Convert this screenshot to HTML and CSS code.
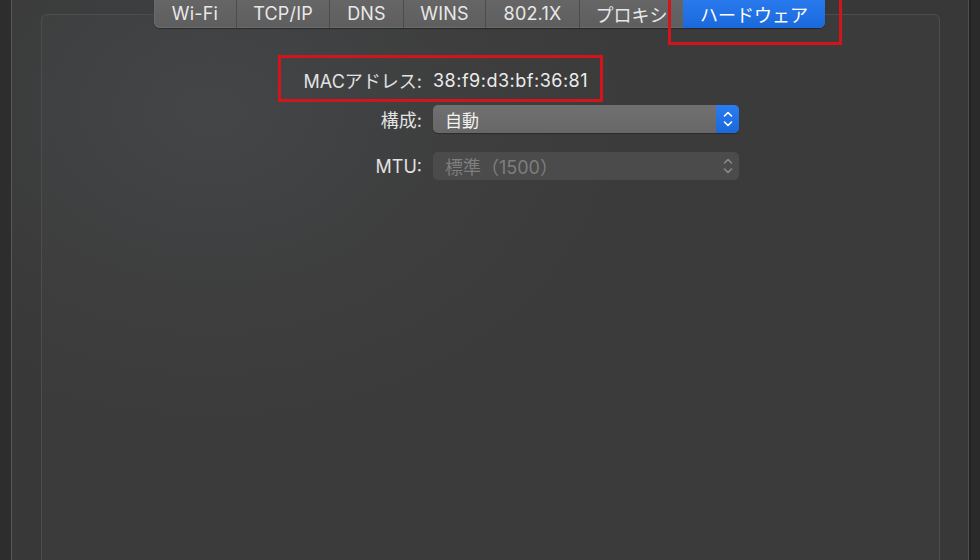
FILE: index.html
```html
<!DOCTYPE html>
<html lang="ja">
<head>
<meta charset="utf-8">
<title>ハードウェア</title>
<link rel="stylesheet" href="styles.css">
</head>
<body>
<div class="window">
  <div class="edge-left"></div>
  <div class="main">
    <div class="tabs">
      <div class="tab">Wi-Fi</div>
      <div class="tab">TCP/IP</div>
      <div class="tab">DNS</div>
      <div class="tab">WINS</div>
      <div class="tab">802.1X</div>
      <div class="tab">プロキシ</div>
      <div class="tab tab-active">ハードウェア</div>
    </div>
    <div class="panel">
      <div class="form">
        <div class="row row-mac">
          <div class="label">MACアドレス:</div>
          <div class="value">38:f9:d3:bf:36:81</div>
        </div>
        <div class="row row-config">
          <div class="label">構成:</div>
          <div class="popup">
            <span class="popup-text">自動</span>
            <span class="stepper">
              <svg width="10" height="18" viewBox="0 0 10 18"><path d="M1.5 6 L5 2.5 L8.5 6" fill="none" stroke="#fff" stroke-width="1.6" stroke-linecap="round" stroke-linejoin="round"/><path d="M1.5 12 L5 15.5 L8.5 12" fill="none" stroke="#fff" stroke-width="1.6" stroke-linecap="round" stroke-linejoin="round"/></svg>
            </span>
          </div>
        </div>
        <div class="row row-mtu">
          <div class="label">MTU:</div>
          <div class="popup popup-disabled">
            <span class="popup-text">標準（1500）</span>
            <span class="stepper">
              <svg width="10" height="18" viewBox="0 0 10 18"><path d="M1.5 6 L5 2.5 L8.5 6" fill="none" stroke="#8a8a8a" stroke-width="1.6" stroke-linecap="round" stroke-linejoin="round"/><path d="M1.5 12 L5 15.5 L8.5 12" fill="none" stroke="#8a8a8a" stroke-width="1.6" stroke-linecap="round" stroke-linejoin="round"/></svg>
            </span>
          </div>
        </div>
      </div>
    </div>
    <div class="mark mark-tab"></div>
    <div class="mark mark-mac"></div>
  </div>
  <div class="edge-right"></div>
</div>
</body>
</html>
```
FILE: styles.css
```css
* { box-sizing: border-box; }
html, body {
  margin: 0;
  padding: 0;
  width: 980px;
  height: 560px;
  overflow: hidden;
  background: #383838;
  font-family: Inter, "Noto Sans CJK JP", sans-serif;
  color: #e4e4e4;
}
.window {
  display: flex;
  height: 560px;
}
.edge-left {
  width: 12px;
  background: #2d2d2d;
  border-right: 1px solid #595959;
  flex: none;
}
.edge-right {
  width: 12px;
  flex: none;
  background: #2a2a2a;
  border-left: 1px solid #4e4e4e;
  box-shadow: inset 2px 0 0 #222;
}
.main {
  flex: 1;
  position: relative;
  display: flex;
  flex-direction: column;
  background: radial-gradient(ellipse 420px 320px at 200px 110px, #404244 0%, #3a3a3a 70%, #383838 100%);
}
.tabs {
  position: relative;
  z-index: 2;
  align-self: center;
  display: flex;
  margin-top: -4px;
  margin-left: -1px;
  height: 32px;
  border-radius: 6px;
  background: linear-gradient(#676767, #5e5e5e);
  box-shadow: 0 1px 1px rgba(0,0,0,0.35), inset 0 0 0 1px #6a6a6a;
}
.tab {
  display: flex;
  align-items: center;
  justify-content: center;
  padding: 3px 0 0;
  font-size: 18px;
  letter-spacing: 0.2px;
  color: #e8e8e8;
  border-right: 1px solid #4c4c4c;
  height: 100%;
}
.tab:nth-child(1) { width: 83px; }
.tab:nth-child(2) { width: 93px; }
.tab:nth-child(3) { width: 74px; }
.tab:nth-child(4) { width: 82px; }
.tab:nth-child(5) { width: 94px; }
.tab:nth-child(6) { width: 103px; border-right: none; letter-spacing: 0; }
.tab-active {
  width: 142px;
  background: linear-gradient(#2a7cf0, #1b69dc);
  color: #ffffff;
  border-right: none;
  letter-spacing: 0;
  border-radius: 0 6px 6px 0;
}
.panel {
  flex: 1;
  margin: -14px 28px 0 29px;
  border: 1px solid #4d4d4d;
  border-bottom: none;
  border-radius: 6px 6px 0 0;
  background: rgba(255,255,255,0.018);
  padding-top: 51px;
}
.form {
  display: flex;
  flex-direction: column;
}
.row {
  display: grid;
  grid-template-columns: 380px 306px;
  column-gap: 11px;
  align-items: center;
  height: 28px;
}
.row-config { margin-top: 11px; }
.row-mtu { margin-top: 19px; }
.label {
  text-align: right;
  font-size: 18px;
  color: #e2e2e2;
}
.value {
  font-size: 18px;
  letter-spacing: 0.5px;
  color: #ececec;
}
.popup {
  display: flex;
  align-items: center;
  height: 28px;
  border-radius: 5px;
  background: linear-gradient(#707070, #676767);
  box-shadow: 0 1px 1px rgba(0,0,0,0.3);
  overflow: hidden;
}
.popup-text {
  flex: 1;
  padding-left: 12px;
  font-size: 17px;
  color: #f2f2f2;
}
.stepper {
  width: 23px;
  height: 100%;
  display: flex;
  align-items: center;
  justify-content: center;
  background: linear-gradient(#2a7cf0, #1a68dc);
}
.popup-disabled {
  background: #4b4b4b;
  box-shadow: none;
}
.popup-disabled .popup-text { color: #7e7e7e; font-size: 18px; }
.popup-disabled .stepper { background: transparent; }
.mark {
  position: absolute;
  border: 3px solid #d4141b;
  z-index: 3;
}
.mark-tab {
  left: 656px;
  top: -4px;
  width: 174px;
  height: 49px;
}
.mark-mac {
  left: 266px;
  top: 55px;
  width: 325px;
  height: 47px;
}
```
